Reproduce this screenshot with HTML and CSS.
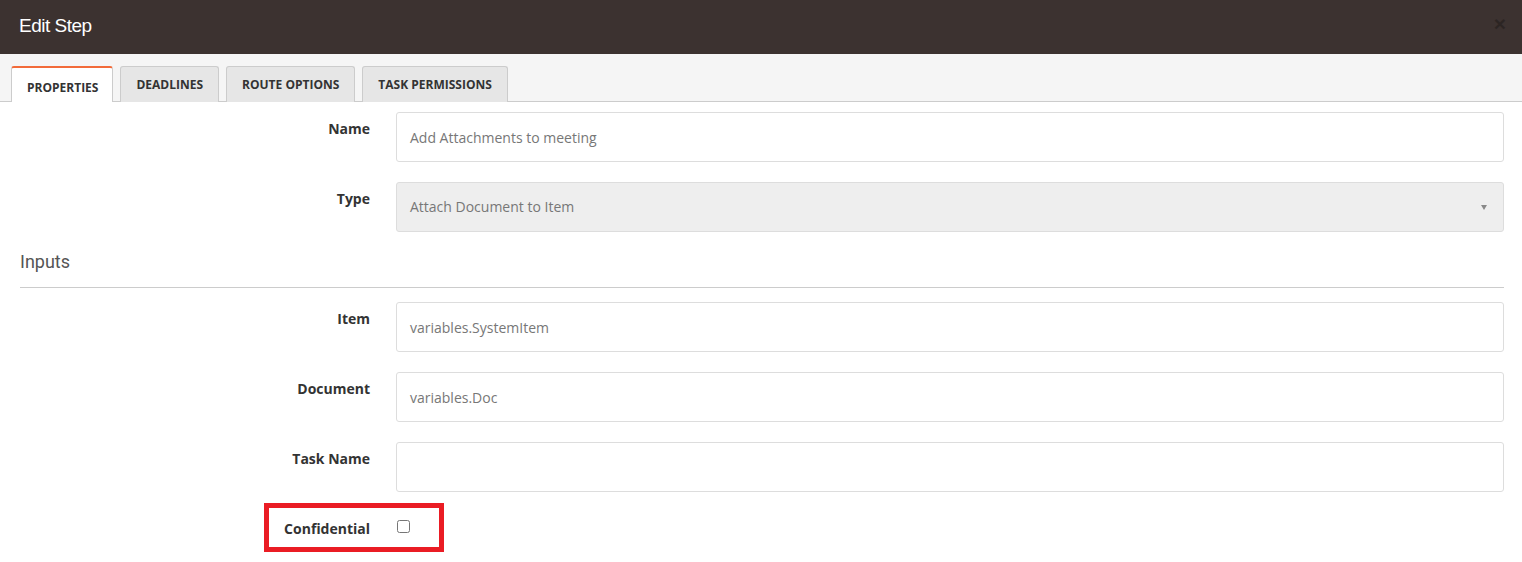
FILE: index.html
```html
<html lang="en">
<head>
    <meta charset="UTF-8">
    <meta name="viewport" content="width=device-width, initial-scale=1.0">
    <title>Edit Step</title>
    <link rel="stylesheet" href="styles.css">
</head>
<body>
    <div class="modal-header">
        <h4 class="modal-title">Edit Step</h4>
        <span class="close">&times;</span>
    </div>
    <div class="tabs">
        <div class="tab active">Properties</div>
        <div class="tab">Deadlines</div>
        <div class="tab">Route Options</div>
        <div class="tab">Task Permissions</div>
    </div>
    <div class="form-body">
        <div class="form-row">
            <label class="form-label">Name</label>
            <div class="form-control">Add Attachments to meeting</div>
        </div>
        <div class="form-row">
            <label class="form-label">Type</label>
            <div class="form-control select">
                <span>Attach Document to Item</span>
                <span class="arrow"></span>
            </div>
        </div>
        <h3 class="section-title">Inputs</h3>
        <div class="form-row">
            <label class="form-label">Item</label>
            <div class="form-control">variables.SystemItem</div>
        </div>
        <div class="form-row">
            <label class="form-label">Document</label>
            <div class="form-control">variables.Doc</div>
        </div>
        <div class="form-row">
            <label class="form-label">Task Name</label>
            <div class="form-control"></div>
        </div>
        <div class="form-row check-row">
            <span class="highlight"></span>
            <label class="form-label">Confidential</label>
            <div><input type="checkbox" class="check"></div>
        </div>
    </div>
</body>
</html>
```

FILE: styles.css
```css
body {
    margin: 0;
    font-family: "Open Sans", sans-serif;
    background: #fff;
    color: #333;
}
.modal-header {
    height: 54px;
    background: #3c3230;
    display: flex;
    align-items: center;
    justify-content: space-between;
    padding: 0 19px;
    box-sizing: border-box;
}
.modal-title {
    margin: -3px 0 0 0;
    color: #fff;
    font-family: "Liberation Sans", Arial, sans-serif;
    font-size: 19px;
    font-weight: normal;
    letter-spacing: -0.5px;
}
.close {
    font-family: "Liberation Sans", Arial, sans-serif;
    font-size: 21px;
    font-weight: bold;
    color: #000;
    opacity: 0.25;
    margin-top: -6px;
    margin-right: -3px;
}
.tabs {
    display: flex;
    gap: 7px;
    background: #f5f5f5;
    padding: 12px 0 0 11px;
    border-bottom: 1px solid #ccc;
    height: 35px;
}
.tab {
    height: 36px;
    box-sizing: border-box;
    margin-bottom: -1px;
    padding: 0 15px;
    display: flex;
    align-items: center;
    background: #e6e6e6;
    border: 1px solid #ccc;
    border-bottom: none;
    border-radius: 3px 3px 0 0;
    font-size: 12px;
    font-weight: bold;
    text-transform: uppercase;
    color: #333;
}
.tab.active {
    background: #fff;
    border-top: 2px solid #f26b3a;
    padding: 4px 14px 0 15px;
}
.form-body {
    padding: 10px 18px 0 0;
}
.form-row {
    display: grid;
    grid-template-columns: 370px 1fr;
    column-gap: 26px;
    margin-bottom: 20px;
}
.form-label {
    text-align: right;
    font-size: 14px;
    font-weight: bold;
    line-height: 20px;
    padding-top: 7px;
    color: #333;
}
.form-control {
    height: 50px;
    box-sizing: border-box;
    border: 1px solid #ddd;
    border-radius: 3px;
    padding: 0 13px;
    display: flex;
    align-items: center;
    font-size: 14px;
    color: #777;
}
.form-control.select {
    background: #eee;
    justify-content: space-between;
    padding-right: 16px;
}
.form-control.select span:first-child {
    margin-top: -2px;
}
.arrow {
    border-style: solid;
    border-width: 5px 3px 0 3px;
    border-color: #888 transparent transparent transparent;
}
.section-title {
    margin: 0 0 14px 20px;
    padding-bottom: 15px;
    border-bottom: 1px solid #ccc;
    font-family: Roboto, sans-serif;
    font-size: 18px;
    font-weight: normal;
    line-height: 20px;
    color: #555;
}
.check-row {
    position: relative;
}
.check {
    width: 13px;
    height: 13px;
    margin: 8px 0 0 1px;
}
.highlight {
    position: absolute;
    left: 264px;
    top: -9px;
    width: 180px;
    height: 49px;
    box-sizing: border-box;
    border: 5px solid #ea1c24;
}
```
